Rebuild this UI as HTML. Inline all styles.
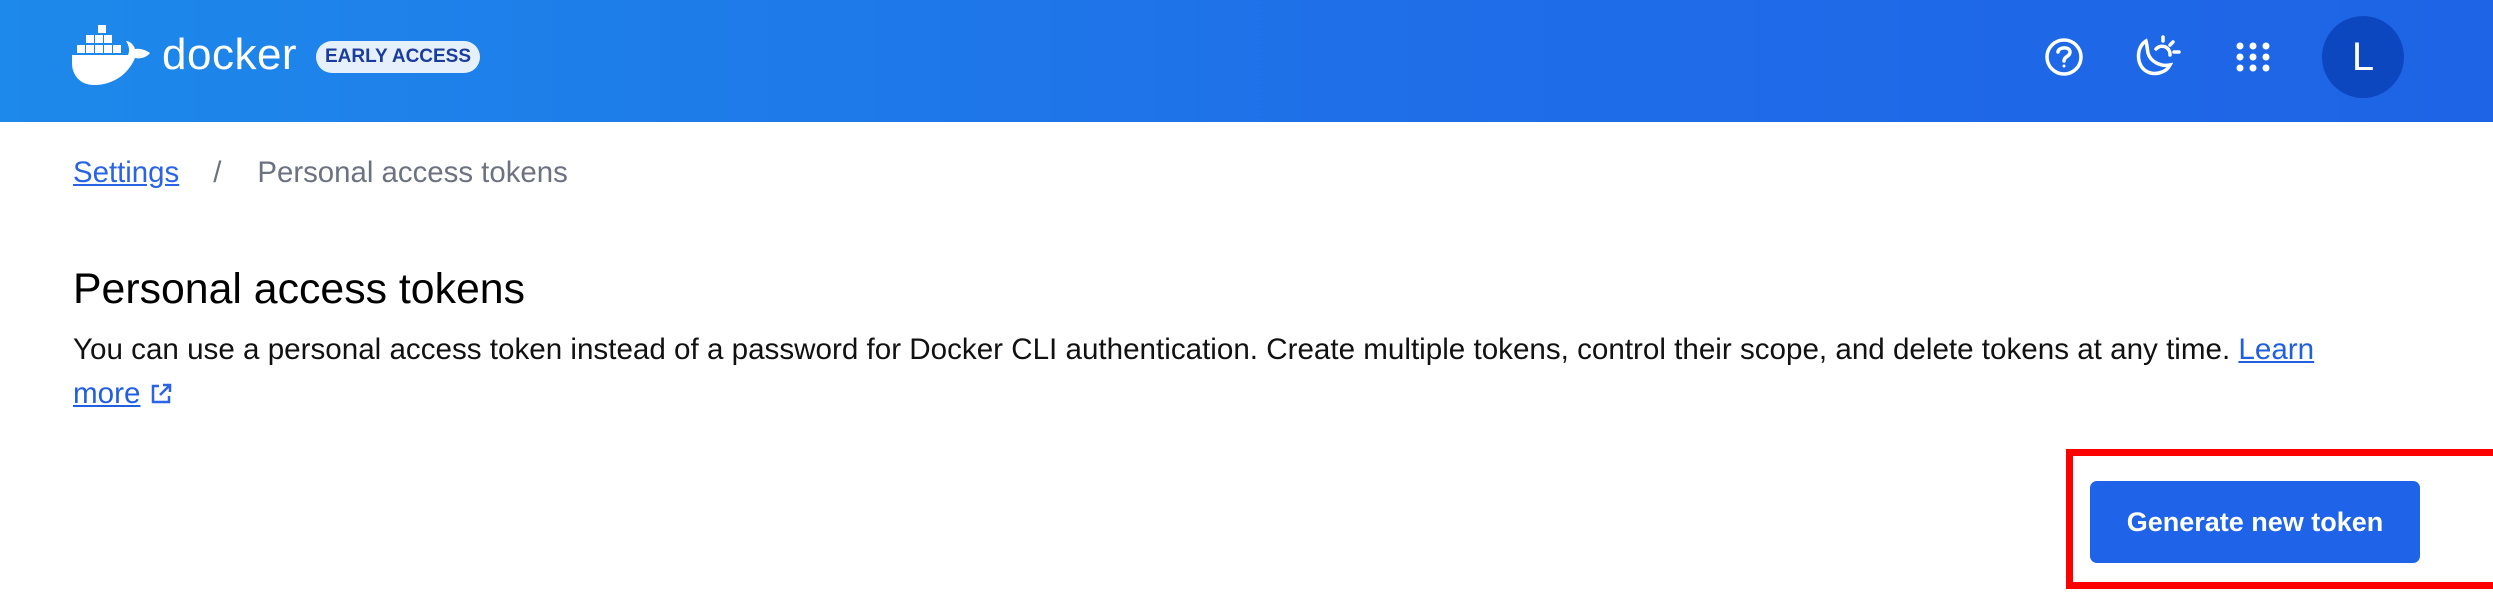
<!DOCTYPE html>
<html><head><meta charset="utf-8"><style>
*{margin:0;padding:0;box-sizing:border-box}
body{width:2493px;height:616px;overflow:hidden;background:#fff;font-family:"Liberation Sans",sans-serif;position:relative}
.hdr{position:absolute;left:0;top:0;width:2493px;height:122px;background:linear-gradient(90deg,#1d89ea,#1f6de8 60%,#1e64e6)}
.abs{position:absolute}
a{color:#1f5fe0;text-decoration:underline}
</style></head><body>
<div class="hdr">
<svg class="abs" style="left:72px;top:25px" width="84" height="62" viewBox="0 0 84 62">
<g fill="#fff">
<rect x="26" y="0" width="8" height="8"/>
<rect x="14" y="10" width="8" height="8"/><rect x="23" y="10" width="8" height="8"/><rect x="32" y="10" width="8" height="8"/>
<rect x="5" y="20" width="8" height="8"/><rect x="14" y="20" width="8" height="8"/><rect x="23" y="20" width="8" height="8"/><rect x="32" y="20" width="8" height="8"/><rect x="41" y="20" width="8" height="8"/>
<path d="M0 30 H56 C58 26 57 20 54 16 C58 16 62 20 63 24 C68 23 74 25 78 28 C74 33 68 34 63 33 C56 50 40 60 22 60 C8 60 0 50 0 38 Z"/>
</g></svg>
<div class="abs" style="left:162px;top:30px;font-size:44px;line-height:50px;color:#fff;letter-spacing:0.5px">docker</div>
<div class="abs" style="left:316px;top:41px;width:164px;height:32px;border-radius:16px;background:#e6f0fc;color:#1a3d9c;font-weight:bold;font-size:19px;line-height:32px;text-align:center">EARLY ACCESS</div>
<svg class="abs" style="left:2044px;top:37px" width="40" height="40" viewBox="0 0 40 40" fill="none" stroke="#fff" stroke-width="3.5">
<circle cx="20" cy="20" r="17"/><path d="M14 15 C14 10 26 9 26 15 C26 20 20 19 20 24" stroke-linecap="round"/><circle cx="20" cy="29" r="1.5" fill="#fff" stroke="none"/></svg>
<svg class="abs" style="left:2132px;top:35px" width="50" height="44" viewBox="0 0 50 44" fill="none" stroke="#fff" stroke-width="3.5" stroke-linecap="round">
<path d="M14 6 C4 12 4 30 14 36 C22 41 34 38 38 30 C28 32 18 26 16 18 C15 13 15 9 14 6 Z"/>
<path d="M24 14 A8 8 0 0 1 38 20"/><path d="M31 2 V6"/><path d="M41 7 L38 10"/><path d="M42 17 H47"/></svg>
<svg class="abs" style="left:2236px;top:42px" width="34" height="30" viewBox="0 0 34 30" fill="#fff">
<circle cx="4" cy="4" r="3.5"/><circle cx="17" cy="4" r="3.5"/><circle cx="30" cy="4" r="3.5"/>
<circle cx="4" cy="15" r="3.5"/><circle cx="17" cy="15" r="3.5"/><circle cx="30" cy="15" r="3.5"/>
<circle cx="4" cy="26" r="3.5"/><circle cx="17" cy="26" r="3.5"/><circle cx="30" cy="26" r="3.5"/></svg>
<div class="abs" style="left:2322px;top:16px;width:82px;height:82px;border-radius:50%;background:#0d47c0;color:#fff;font-size:40px;line-height:82px;text-align:center">L</div>
</div>
<div class="abs" style="left:73px;top:156px;font-size:29.4px;line-height:34px;color:#6b7280;white-space:nowrap"><a href="#" style="color:#2a63e6">Settings</a><span style="margin:0 36px 0 34px">/</span>Personal access tokens</div>
<div class="abs" style="left:73px;top:265px;font-size:42.8px;line-height:48px;color:#000">Personal access tokens</div>
<div class="abs" style="left:73px;top:328px;font-size:29.6px;line-height:44px;color:#111;width:2400px;white-space:nowrap">You can use a personal access token instead of a password for Docker CLI authentication. Create multiple tokens, control their scope, and delete tokens at any time. <a href="#">Learn</a><br><a href="#">more</a> <svg width="24" height="24" viewBox="0 0 24 24" fill="none" stroke="#2a63e6" stroke-width="2.5" style="vertical-align:-3px"><path d="M10 4 H4 V20 H20 V14"/><path d="M14 3 H21 V10 M21 3 L11 13"/></svg></div>
<div class="abs" style="left:2066px;top:449px;width:440px;height:140px;border:7px solid #f00"></div>
<div class="abs" style="left:2090px;top:481px;width:330px;height:82px;border-radius:7px;background:#1f63e8;color:#fff;font-weight:bold;font-size:27px;line-height:82px;text-align:center">Generate new token</div>
</body></html>
